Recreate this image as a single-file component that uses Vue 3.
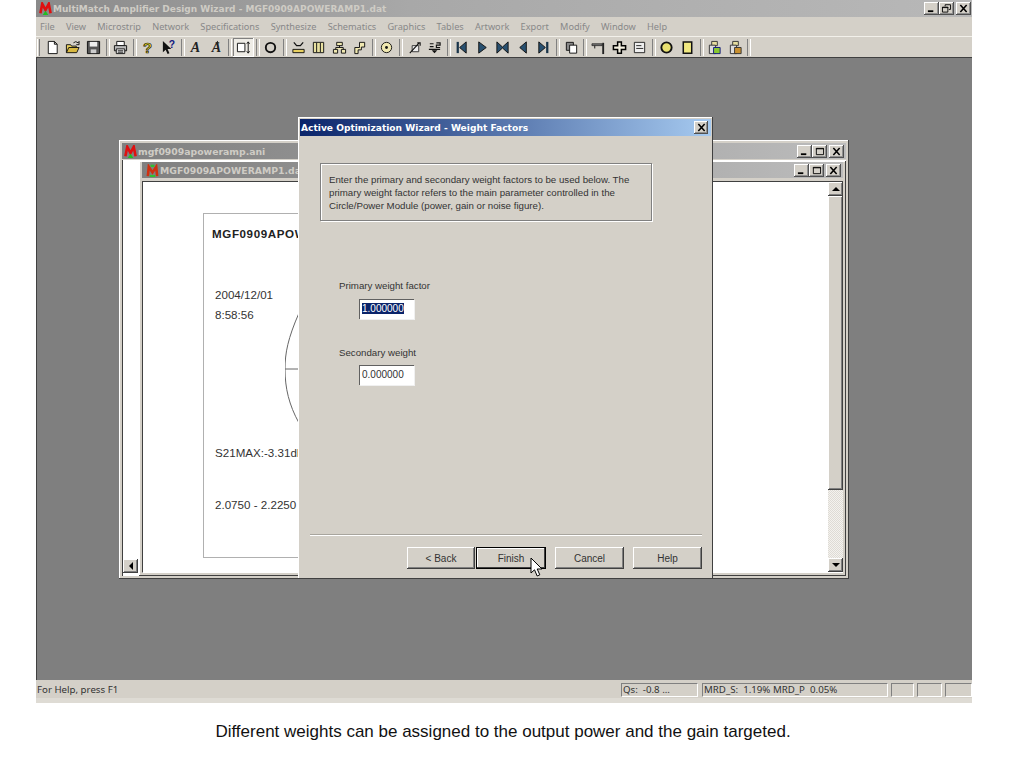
<template>
  <div class="page">
    <div class="app">
      <!-- title bar -->
      <div class="titlebar">
        <svg class="logo" viewBox="0 0 16 14" v-html="logoSvg"></svg>
        <span class="titletext">MultiMatch Amplifier Design Wizard - MGF0909APOWERAMP1.dat</span>
        <div class="controls app-controls">
          <button v-for="c in ctlRestore" :key="c" class="ctl"><svg viewBox="0 0 12 10" v-html="glyphs[c]"></svg></button>
        </div>
      </div>

      <!-- menu -->
      <div class="menubar">
        <span v-for="m in menus" :key="m" class="menuitem">{{ m }}</span>
      </div>

      <!-- toolbar -->
      <div class="toolbar">
        <span class="grip"></span>
        <template v-for="(t, i) in tools" :key="i">
          <span v-if="t === '|'" class="sep"></span>
          <span v-else class="tool" :class="{ pressed: t === 'dim' }">
            <svg viewBox="0 0 16 16" v-html="icons[t]"></svg>
          </span>
        </template>
        <span class="sep last"></span>
      </div>

      <!-- MDI area -->
      <div class="workspace">
        <section class="mdi outer">
          <div class="mdi-title">
            <svg class="logo small" viewBox="0 0 16 14" v-html="logoSvg"></svg>
            <span>mgf0909apoweramp.ani</span>
            <div class="controls">
              <button v-for="c in ctlNormal" :key="c" class="ctl"><svg viewBox="0 0 12 10" v-html="glyphs[c]"></svg></button>
            </div>
          </div>
          <div class="outer-client">
            <button class="sb-btn hscroll-left"><span class="tri left"></span></button>

            <section class="mdi inner">
              <div class="mdi-title">
                <svg class="logo small" viewBox="0 0 16 14" v-html="logoSvg2"></svg>
                <span>MGF0909APOWERAMP1.dat</span>
                <div class="controls">
                  <button v-for="c in ctlNormal" :key="c" class="ctl"><svg viewBox="0 0 12 10" v-html="glyphs[c]"></svg></button>
                </div>
              </div>
              <div class="inner-client">
                <div class="doc">
                  <div class="paper">
                    <div class="paper-head">MGF0909APOWERAMP1</div>
                    <div class="paper-date">2004/12/01</div>
                    <div class="paper-time">8:58:56</div>
                    <div class="paper-s21">S21MAX:-3.31dB</div>
                    <div class="paper-freq">2.0750 - 2.2250 GHz</div>
                    <svg class="chart" viewBox="0 0 20 120">
                      <path d="M14 0 C3 25 0 40 0 56 C0 75 4 92 14 110 M0 56 H14" fill="none" stroke="#666" stroke-width="1" />
                    </svg>
                  </div>
                </div>
                <div class="vscroll">
                  <button class="sb-btn"><span class="tri up"></span></button>
                  <div class="thumb"></div>
                  <div class="track"></div>
                  <button class="sb-btn"><span class="tri down"></span></button>
                </div>
              </div>
            </section>
          </div>
        </section>

        <!-- wizard dialog -->
        <section class="dialog">
          <div class="dialog-title">
            <span>Active Optimization Wizard - Weight Factors</span>
            <button class="ctl"><svg viewBox="0 0 12 10" v-html="glyphs.close"></svg></button>
          </div>
          <div class="dialog-body">
            <div class="notice">
              Enter the primary and secondary weight factors to be used below. The<br />
              primary weight factor refers to the main parameter controlled in the<br />
              Circle/Power Module (power, gain or noise figure).
            </div>
            <div class="field first">
              <label>Primary weight factor</label>
              <div class="edit"><span class="selected">1.000000</span></div>
            </div>
            <div class="field second">
              <label>Secondary weight</label>
              <div class="edit">0.000000</div>
            </div>
            <div class="rule"></div>
            <div class="buttons">
              <button class="btn">&lt; Back</button>
              <button class="btn default">Finish</button>
              <button class="btn cancel">Cancel</button>
              <button class="btn help">Help</button>
            </div>
          </div>
          <svg class="cursor" viewBox="0 0 13 21">
            <path d="M1 1 V16 L4.5 12.8 L7.2 19 L9.8 17.8 L7.2 12 H12 Z" fill="#fff" stroke="#000" stroke-width="1" />
          </svg>
        </section>
      </div>

      <!-- status bar -->
      <div class="statusbar">
        <span class="status-help">For Help, press F1</span>
        <span class="pane qs">Qs:&nbsp; -0.8 ...</span>
        <span class="pane mrd">MRD_S:&nbsp; 1.19% MRD_P&nbsp; 0.05%</span>
        <span class="pane k1"></span>
        <span class="pane k2"></span>
        <span class="pane k3"></span>
      </div>
    </div>

    <p class="caption">Different weights can be assigned to the output power and the gain targeted.</p>
  </div>
</template>

<script setup>
const menus = ['File', 'View', 'Microstrip', 'Network', 'Specifications', 'Synthesize', 'Schematics', 'Graphics', 'Tables', 'Artwork', 'Export', 'Modify', 'Window', 'Help']

const ctlNormal = ['min', 'max', 'close']
const ctlRestore = ['min', 'restore', 'close']

const logoSvg = '<path d="M2.5 12 L4.5 2 L8 8.5 L11.5 2 L13.5 12" fill="none" stroke="#e01010" stroke-width="2.8"/><path d="M5 14 L8 9.5 L11 14 Z" fill="#20c020"/>'
const logoSvg2 = '<path d="M3 13 L4 3 L8 9 L12 3 L13 13" fill="none" stroke="#d03010" stroke-width="2.8"/><path d="M5 13 H11 M6 2 H10" stroke="#30c030" stroke-width="2.4"/>'

const glyphs = {
  min: '<path d="M2 8 H8" stroke="#000" stroke-width="2"/>',
  max: '<path d="M2.5 1.5 H10.5 V8.5 H2.5 Z M2 2 H11" fill="none" stroke="#000" stroke-width="1"/>',
  restore: '<path d="M4.5 2.5 V.8 H10.5 V6 H8.5 M1.5 3.5 H7.5 V9 H1.5 Z M1 4 H8" fill="none" stroke="#000" stroke-width="1"/>',
  close: '<path d="M2.5 1 L9.5 9 M9.5 1 L2.5 9" stroke="#000" stroke-width="1.7"/>'
}

const dark = '#222'
const icons = {
  new: `<path d="M3.5 1.5 H10 L13 4.5 V14.5 H3.5 Z M10 1.5 V4.5 H13" fill="#fff" stroke="#111"/>`,
  open: `<path d="M1.5 13.5 V5 H6 L7 6.5 H12 V8" fill="#e8d060" stroke="#111"/><path d="M1.5 13.5 L4 8 H15 L12.5 13.5 Z" fill="#d8b840" stroke="#111"/><path d="M9 3 Q11.5 .5 14 3 L15 1.5 V5 H12" fill="none" stroke="#111"/>`,
  save: `<path d="M1.5 1.5 H14.5 V14.5 H1.5 Z" fill="#555" stroke="#111"/><path d="M4 2 H12 V7 H4 Z" fill="#eee"/><path d="M5 10 H11 V14 H5 Z" fill="#ccc"/>`,
  print: `<path d="M4 1.5 H12 V6 H4 Z" fill="#fff" stroke="#111"/><path d="M1.5 6 H14.5 V11.5 H1.5 Z" fill="#bbb" stroke="#111"/><path d="M3.5 9.5 H12.5 V14.5 H3.5 Z M5 11.5 H11 M5 13 H11" fill="#fff" stroke="#111"/>`,
  what: `<text x="8" y="14" font-family="Liberation Sans" font-weight="700" font-size="16" text-anchor="middle" fill="#e8d020" stroke="#111" stroke-width=".7">?</text>`,
  whatarrow: `<path d="M2 1 V13 L5 10.5 L7 15 L9 14 L7 9.5 H11 Z" fill="#111"/><text x="11.5" y="9" font-family="Liberation Sans" font-weight="700" font-size="11" text-anchor="middle" fill="#101880">?</text>`,
  a1: `<text x="8" y="13" font-family="Liberation Serif" font-style="italic" font-weight="700" font-size="15" text-anchor="middle" fill="${dark}">A</text>`,
  a2: `<text x="8" y="13" font-family="Liberation Serif" font-style="italic" font-weight="700" font-size="15" text-anchor="middle" fill="${dark}">A</text><path d="M9 1 V5 M7 3 H11" stroke="${dark}"/>`,
  dim: `<path d="M1.5 3.5 H9.5 V12.5 H1.5 Z" fill="#fff" stroke="#111"/><path d="M13 2 V14 M11.5 4 L13 2 L14.5 4 M11.5 12 L13 14 L14.5 12" fill="none" stroke="#111"/>`,
  ring: `<circle cx="8" cy="8" r="5" fill="#d4d0c8" stroke="#111" stroke-width="2"/>`,
  hourglass: `<path d="M3 2.5 L6 6 H10 L13 2.5" fill="none" stroke="#111" stroke-width="1.3"/><path d="M2 10 H14 V13.5 H2 Z" fill="#e8d060" stroke="#111"/>`,
  bars: `<path d="M2.5 2.5 H13.5 V13.5 H2.5 Z" fill="#e8e0a0" stroke="#111"/><path d="M6 3 V13 M10 3 V13" stroke="#111"/>`,
  tree: `<path d="M5 2.5 H11 V6 H5 Z M1.5 10 H6 V14 H1.5 Z M10 10 H14.5 V14 H10 Z M8 6 V8 M4 10 V8 H12 V10" fill="#f0e8b0" stroke="#111"/>`,
  step: `<path d="M8 2.5 H13.5 V7.5 H10 V10.5 H6.5 V14.5 H3 V8 H8 Z" fill="#f0e8b0" stroke="#111"/>`,
  target: `<circle cx="8" cy="8" r="5.5" fill="#f0e8b0" stroke="#111"/><circle cx="8" cy="8" r="1.5" fill="#111"/>`,
  pin: `<path d="M5.5 6 H12.5 V12.5 H5.5 Z" fill="#eee" stroke="#333"/><path d="M3 14 L13 3 M11 3 H14 V6" fill="none" stroke="#111" stroke-width="1.2"/>`,
  sort: `<path d="M3 4 H7 M3 7 H7 M10 3 H14 V5.5 H10 V8 H14 M2 10 H14" fill="none" stroke="#111" stroke-width="1.2"/><path d="M5 11 H11 L8 14 Z" fill="#111"/>`,
  first: `<path d="M4 2 V14" stroke="#18344a" stroke-width="2.4"/><path d="M13 2 V14 L6 8 Z" fill="#285070" stroke="#111"/>`,
  play: `<path d="M4 2 V14 L12 8 Z" fill="#285070" stroke="#111"/>`,
  bow: `<path d="M2 2 L8 7.5 L14 2 V14 L8 8.5 L2 14 Z" fill="#285070" stroke="#111"/>`,
  prev: `<path d="M11 2 V14 L4 8 Z" fill="#285070" stroke="#111"/>`,
  last: `<path d="M12 2 V14" stroke="#18344a" stroke-width="2.4"/><path d="M3 2 V14 L10 8 Z" fill="#285070" stroke="#111"/>`,
  copy: `<path d="M2.5 2.5 H10 V11 H2.5 Z" fill="#888" stroke="#111"/><path d="M6 5.5 H13.5 V14 H6 Z" fill="#fff" stroke="#111"/>`,
  hammer: `<path d="M1 4 H12 V6 H1 Z" fill="#777" stroke="#111" stroke-width=".7"/><path d="M12 3 H14 V15 H12 Z" fill="#222"/><path d="M4 6 V9" stroke="#111"/>`,
  cross: `<path d="M6 2 H10 V6 H14.5 V10 H10 V14 H6 V10 H1.5 V6 H6 Z" fill="#f4f0e0" stroke="#000" stroke-width="1.6"/>`,
  note: `<path d="M2.5 2.5 H13.5 V13.5 H2.5 Z" fill="#eee" stroke="#222"/><path d="M4.5 6 H10 M4.5 9 H12" stroke="#222"/>`,
  yring: `<circle cx="8" cy="8" r="5.5" fill="#e8e070" stroke="#111" stroke-width="2"/>`,
  ybox: `<path d="M3.5 2 H12.5 V14 H3.5 Z" fill="#f0e880" stroke="#111" stroke-width="1.6"/>`,
  stack1: `<path d="M5 1.5 H11 V6 H5 Z" fill="#e8e0a0" stroke="#333"/><path d="M2.5 5.5 H9 V14.5 H2.5 Z" fill="#ddd" stroke="#333"/><path d="M7 8 H14 V14.5 H7 Z" fill="#88c830" stroke="#101880"/>`,
  stack2: `<path d="M5 1.5 H11 V6 H5 Z" fill="#e8e0a0" stroke="#333"/><path d="M2.5 5.5 H9 V14.5 H2.5 Z" fill="#ddd" stroke="#333"/><path d="M7 8 H14 V14.5 H7 Z" fill="#c89030" stroke="#333"/>`
}

const tools = ['new', 'open', 'save', '|', 'print', '|', 'what', 'whatarrow', '|', 'a1', 'a2', '|', 'dim', '|', 'ring', '|', 'hourglass', 'bars', 'tree', 'step', '|', 'target', '|', 'pin', 'sort', '|', 'first', 'play', 'bow', 'prev', 'last', '|', 'copy', '|', 'hammer', 'cross', 'note', '|', 'yring', 'ybox', '|', 'stack1', 'stack2']
</script>

<style scoped>
* {
  box-sizing: border-box;
}

.page {
  width: 1024px;
  height: 768px;
  background: #fff;
  font-family: "Liberation Sans", Arial, sans-serif;
  overflow: hidden;
}

.app {
  width: 936px;
  height: 703px;
  margin-left: 36px;
  background: #d4d0c8;
  display: flex;
  flex-direction: column;
}

.titlebar {
  height: 17px;
  flex: none;
  display: flex;
  align-items: center;
  padding-left: 2px;
  background: linear-gradient(90deg, #8a8a8a 0%, #a8a8a8 40%, #b8b8b8 100%);
  color: #cfccc5;
  font-family: "DejaVu Sans", sans-serif;
  font-weight: 700;
  font-size: 9px;
}

.logo {
  width: 15px;
  height: 13px;
  margin-right: 0;
  flex: none;
}

.controls {
  margin-left: auto;
  display: flex;
}

.app-controls {
  margin-right: 1px;
}

.ctl {
  width: 15px;
  height: 13px;
  padding: 1px 1px;
  border: none;
  background: #d4d0c8;
  box-shadow: inset -1px -1px #505050, inset 1px 1px #fff, inset -2px -2px #909090;
  display: flex;
  align-items: center;
  justify-content: center;
}

.ctl svg {
  width: 11px;
  height: 9px;
}

.controls .ctl:last-child {
  margin-left: 2px;
}

.menubar {
  height: 19px;
  flex: none;
  display: flex;
  align-items: center;
  padding-left: 4px;
  color: #888;
  font-family: "Noto Sans", sans-serif;
  font-size: 9.2px;
}

.menuitem {
  margin-right: 11.2px;
}

.toolbar {
  height: 21px;
  flex: none;
  display: flex;
  align-items: center;
  padding-left: 1px;
  border-top: 1px solid #f2f0ea;
}

.grip {
  width: 3px;
  height: 17px;
  margin-right: 2px;
  border-left: 1px solid #fff;
  border-right: 1px solid #808080;
}

.tool {
  width: 20.5px;
  height: 19px;
  flex: none;
  display: flex;
  align-items: center;
  justify-content: center;
}

.tool svg {
  width: 15px;
  height: 15px;
}

.tool.pressed {
  background: #eeece6;
  box-shadow: inset -1px -1px #fff, inset 1px 1px #808080;
}

.sep {
  width: 6.8px;
  height: 17px;
  flex: none;
  position: relative;
}

.sep::after {
  content: "";
  position: absolute;
  left: 2px;
  top: 0;
  bottom: 0;
  width: 2px;
  border-left: 1px solid #808080;
  border-right: 1px solid #fff;
}

.workspace {
  flex: 1;
  position: relative;
  background: #7f7f7f;
  border-top: 1px solid #404040;
  border-left: 1px solid #404040;
}

.mdi {
  background: #d4d0c8;
  display: flex;
  flex-direction: column;
  box-shadow: inset -1px -1px #404040, inset 1px 1px #fff;
}

.mdi-title {
  height: 16px;
  flex: none;
  display: flex;
  align-items: center;
  padding: 0 2px 0 1px;
  background: linear-gradient(90deg, #808080, #bcbcbc);
  color: #cfccc5;
  font-family: "DejaVu Sans", sans-serif;
  font-weight: 700;
  font-size: 9.3px;
}

.outer {
  position: absolute;
  left: 82px;
  top: 82px;
  width: 730px;
  height: 439px;
  padding: 3px;
}

.outer-client {
  flex: 1;
  margin-top: 1px;
  position: relative;
  background: #fff;
  border-left: 1px solid #404040;
}

.hscroll-left {
  position: absolute;
  left: 0;
  top: 399px;
  width: 16px;
}

.sb-btn {
  width: 15px;
  height: 14px;
  flex: none;
  padding: 0;
  border: none;
  background: #d4d0c8;
  box-shadow: inset -1px -1px #404040, inset 1px 1px #fff, inset -2px -2px #808080;
  display: flex;
  align-items: center;
  justify-content: center;
}

.tri {
  width: 0;
  height: 0;
  border: 4px solid transparent;
}

.tri.up {
  border-top: none;
  border-bottom-color: #000;
}

.tri.down {
  border-bottom: none;
  border-top-color: #000;
}

.tri.left {
  border-left: none;
  border-right-color: #000;
}

.inner {
  position: absolute;
  left: 16px;
  top: 1px;
  width: 707px;
  height: 415px;
  padding: 1px 3px 3px;
}

.inner .mdi-title {
  padding-left: 3px;
}

.inner-client {
  flex: 1;
  margin-top: 3px;
  display: flex;
  background: #fff;
  border-top: 1px solid #404040;
  border-left: 1px solid #404040;
  border-bottom: 1px solid #fff;
  min-height: 0;
}

.doc {
  flex: 1;
  padding: 31px 0 0 60px;
}

.paper {
  position: relative;
  width: 300px;
  height: 345px;
  padding: 0 0 0 8px;
  border: 1px solid #b0b0b0;
  color: #333;
  font-size: 11.6px;
}

.paper-head {
  margin-top: 13px;
  font-weight: 700;
  color: #222;
  letter-spacing: .6px;
}

.paper-date {
  margin: 48px 0 0 3px;
}

.paper-time {
  margin: 7px 0 0 3px;
}

.paper-s21 {
  margin: 125px 0 0 3px;
}

.paper-freq {
  margin: 39px 0 0 3px;
}

.chart {
  position: absolute;
  left: 81px;
  top: 99px;
  width: 20px;
  height: 120px;
}

.vscroll {
  width: 15px;
  flex: none;
  display: flex;
  flex-direction: column;
  background: #d4d0c8;
}

.thumb {
  height: 294px;
  flex: none;
  background: #d4d0c8;
  box-shadow: inset -1px -1px #404040, inset 1px 1px #fff, inset -2px -2px #808080;
}

.track {
  flex: 1;
  background: repeating-conic-gradient(#f4f2ee 0 25%, #dedbd5 0 50%) 0 0 / 2px 2px;
}

.dialog {
  position: absolute;
  left: 261px;
  top: 59px;
  width: 415px;
  height: 462px;
  padding: 2px;
  background: #d4d0c8;
  display: flex;
  flex-direction: column;
  box-shadow: inset -1px -1px #404040, inset 1px 1px #fff;
}

.dialog-title {
  height: 17px;
  flex: none;
  display: flex;
  align-items: center;
  justify-content: space-between;
  padding: 0 2px 0 1px;
  background: linear-gradient(90deg, #0a246a, #a6caf0);
  color: #fff;
  font-family: "DejaVu Sans", sans-serif;
  font-weight: 700;
  font-size: 9.1px;
}

.dialog-title .ctl {
  width: 14px;
  margin-right: 1px;
}

.dialog-body {
  flex: 1;
  padding: 27px 9px 0 10px;
  font-size: 9.7px;
  color: #333;
}

.notice {
  width: 332px;
  height: 58px;
  margin-left: 10px;
  padding: 9px 8px;
  line-height: 13px;
  border: 1px solid #808080;
  box-shadow: 1px 1px #fff, inset 1px 1px #fff;
  white-space: nowrap;
}

.field {
  margin-left: 29px;
}

.field.first {
  margin-top: 59px;
}

.field.second {
  margin-top: 28px;
}

.field label {
  display: block;
  line-height: 12px;
}

.edit {
  width: 55px;
  height: 20px;
  margin: 7px 0 0 20px;
  padding: 3px 2px;
  background: #fff;
  line-height: 12px;
  font-size: 10px;
  border-top: 1px solid #606060;
  border-left: 1px solid #606060;
  box-shadow: 1px 1px #f0f0f0;
}

.field.second .edit {
  margin-top: 6px;
}

.selected {
  background: #0a246a;
  color: #fff;
}

.rule {
  margin: 149px 0 0 0;
  height: 2px;
  border-top: 1px solid #a8a59e;
  border-bottom: 1px solid #fff;
}

.buttons {
  margin-top: 11px;
  padding-left: 97px;
  display: flex;
}

.btn {
  width: 68px;
  height: 22px;
  padding: 0;
  border: none;
  background: #d4d0c8;
  font: inherit;
  font-size: 10px;
  color: #333;
  box-shadow: inset -1px -1px #404040, inset 1px 1px #fff, inset -2px -2px #808080;
}

.btn.default {
  width: 70px;
  margin-left: 1px;
  border: 1px solid #000;
  box-shadow: inset -1px -1px #404040, inset 1px 1px #fff;
}

.btn.cancel,
.btn.help {
  width: 69px;
  margin-left: 9px;
}

.cursor {
  position: absolute;
  left: 232px;
  top: 440px;
  width: 13px;
  height: 21px;
}

.statusbar {
  height: 23px;
  flex: none;
  display: flex;
  align-items: center;
  font-family: "Noto Sans", sans-serif;
  font-size: 9.7px;
  color: #333;
  padding-top: 1px;
  padding-left: 1px;
  border-bottom: 5px solid #dedbd4;
}

.status-help {
  margin-right: auto;
}

.pane {
  height: 14px;
  line-height: 12px;
  padding-left: 1px;
  border-top: 1px solid #808080;
  border-left: 1px solid #808080;
  border-right: 1px solid #fff;
  border-bottom: 1px solid #fff;
  white-space: nowrap;
  overflow: hidden;
}

.qs {
  width: 77px;
  margin-right: 4px;
}

.mrd {
  width: 186px;
  margin-right: 3px;
}

.k1 {
  width: 23px;
  margin-right: 3px;
}

.k2 {
  width: 25px;
  margin-right: 3px;
}

.k3 {
  width: 27px;
}

.caption {
  margin: 20px 0 0 0;
  text-align: center;
  font-size: 17px;
  line-height: 18px;
  color: #111;
  padding-right: 18px;
}
</style>
